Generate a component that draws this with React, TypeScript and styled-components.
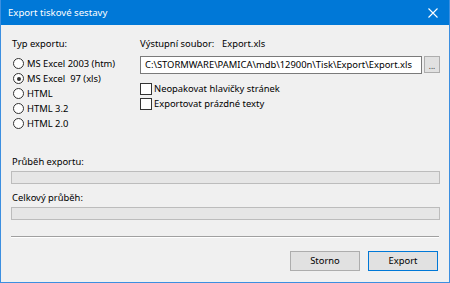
import React from 'react';
import styled, { createGlobalStyle } from 'styled-components';

const GlobalStyle = createGlobalStyle`
    html, body {
        margin: 0;
        padding: 0;
        background: #f0f0f0;
    }
    body {
        font-family: "Noto Sans", "Open Sans", sans-serif;
        font-size: 9.4px;
        color: #000;
    }
`;

const formats = ['MS Excel 2003 (htm)', 'MS Excel  97 (xls)', 'HTML', 'HTML 3.2', 'HTML 2.0'];

export default function App() {
    return (
        <Window>
            <GlobalStyle />
            <TitleBar>
                <Title>Export tiskové sestavy</Title>
                <CloseButton>
                    <svg width="10" height="10" viewBox="0 0 10 10">
                        <path d="M0.5 0.5 L9.5 9.5 M9.5 0.5 L0.5 9.5" stroke="#fff" strokeWidth="1.1" />
                    </svg>
                </CloseButton>
            </TitleBar>

            <Body>
                <TopRow>
                    <TypeColumn>
                        <Label>Typ exportu:</Label>
                        <RadioList>
                            {formats.map((f, i) => (
                                <Option key={f}>
                                    <Radio checked={i === 1} />
                                    <OptionText>{f}</OptionText>
                                </Option>
                            ))}
                        </RadioList>
                    </TypeColumn>

                    <FileColumn>
                        <FileHeader>
                            <Label>Výstupní soubor:</Label>
                            <Label>Export.xls</Label>
                        </FileHeader>
                        <PathRow>
                            <PathInput>C:\STORMWARE\PAMICA\mdb\12900n\Tisk\Export\Export.xls</PathInput>
                            <BrowseButton>...</BrowseButton>
                        </PathRow>
                        <CheckList>
                            <Option>
                                <Checkbox />
                                <OptionText>Neopakovat hlavičky stránek</OptionText>
                            </Option>
                            <Option>
                                <Checkbox />
                                <OptionText>Exportovat prázdné texty</OptionText>
                            </Option>
                        </CheckList>
                    </FileColumn>
                </TopRow>

                <ProgressBlock>
                    <Label>Průběh exportu:</Label>
                    <ProgressBar />
                </ProgressBlock>
                <ProgressBlock second>
                    <Label>Celkový průběh:</Label>
                    <ProgressBar />
                </ProgressBlock>

                <Separator />

                <ButtonRow>
                    <Button>Storno</Button>
                    <Button primary>Export</Button>
                </ButtonRow>
            </Body>
        </Window>
    );
}

const Window = styled.div`
    width: 450px;
    height: 283px;
    box-sizing: border-box;
    border: 1px solid #3c8fe0;
    border-top: none;
    display: flex;
    flex-direction: column;
    background: #f0f0f0;
    overflow: hidden;
`;

const TitleBar = styled.div`
    height: 25px;
    margin: 0 -1px;
    background: #0078d7;
    display: flex;
    align-items: center;
    justify-content: space-between;
    padding: 0 0 0 8px;
`;

const Title = styled.div`
    color: #fff;
    font-size: 9.6px;
`;

const CloseButton = styled.div`
    width: 32px;
    height: 25px;
    margin-right: 1px;
    display: flex;
    align-items: center;
    justify-content: center;
`;

const Body = styled.div`
    flex: 1;
    padding: 11px 10px 0 10px;
    display: flex;
    flex-direction: column;
`;

const TopRow = styled.div`
    display: grid;
    grid-template-columns: 129px 1fr;
`;

const TypeColumn = styled.div`
    display: flex;
    flex-direction: column;
    padding-left: 1px;
`;

const FileColumn = styled.div`
    display: flex;
    flex-direction: column;
`;

const Label = styled.div`
    line-height: 15px;
    white-space: pre;
`;

const FileHeader = styled.div`
    display: grid;
    grid-template-columns: 82px auto;
`;

const RadioList = styled.div`
    margin-top: 5px;
    display: flex;
    flex-direction: column;
`;

const Option = styled.div`
    display: flex;
    align-items: center;
    height: 15px;
`;

const OptionText = styled.span`
    white-space: pre;
    line-height: 15px;
`;

const Radio = styled.span<{ checked?: boolean }>`
    width: 9px;
    height: 9px;
    border: 1px solid #333;
    border-radius: 50%;
    background: #fff;
    margin: 0 3px 0 1px;
    position: relative;
    flex: none;
    &::after {
        content: '';
        display: ${p => (p.checked ? 'block' : 'none')};
        position: absolute;
        left: 2.5px;
        top: 2.5px;
        width: 4px;
        height: 4px;
        border-radius: 50%;
        background: #333;
    }
`;

const Checkbox = styled.span`
    width: 10px;
    height: 10px;
    border: 1px solid #333;
    background: #fff;
    margin-right: 2px;
    flex: none;
`;

const PathRow = styled.div`
    display: flex;
    gap: 2px;
    margin-top: 5px;
`;

const PathInput = styled.div`
    width: 282px;
    height: 18px;
    box-sizing: border-box;
    border: 1px solid #7a7a7a;
    background: #fff;
    padding: 0 4px;
    line-height: 16px;
    white-space: nowrap;
    overflow: hidden;
`;

const BrowseButton = styled.div`
    width: 16px;
    height: 17px;
    box-sizing: border-box;
    border: 1px solid #adadad;
    background: #e1e1e1;
    font-size: 8px;
    text-align: center;
    line-height: 17px;
    color: #333;
`;

const CheckList = styled.div`
    margin-top: 7px;
    display: flex;
    flex-direction: column;
`;

const ProgressBlock = styled.div<{ second?: boolean }>`
    margin-top: ${p => (p.second ? '6px' : '23px')};
    padding-left: 1px;
    display: flex;
    flex-direction: column;
    gap: 2px;
`;

const ProgressBar = styled.div`
    margin-left: -1px;
    width: 429px;
    height: 13px;
    box-sizing: border-box;
    border: 1px solid #bcbcbc;
    background: #e6e6e6;
`;

const Separator = styled.div`
    margin-top: 16px;
    width: 428px;
    height: 1px;
    border-top: 1px solid #a0a0a0;
    background: #fff;
`;

const ButtonRow = styled.div`
    margin-top: 13px;
    display: flex;
    justify-content: flex-end;
    gap: 8px;
    padding-right: 1px;
`;

const Button = styled.div<{ primary?: boolean }>`
    width: 70px;
    height: 20px;
    box-sizing: border-box;
    border: 1px solid ${p => (p.primary ? '#0078d7' : '#adadad')};
    background: #e1e1e1;
    text-align: center;
    line-height: 18px;
`;
